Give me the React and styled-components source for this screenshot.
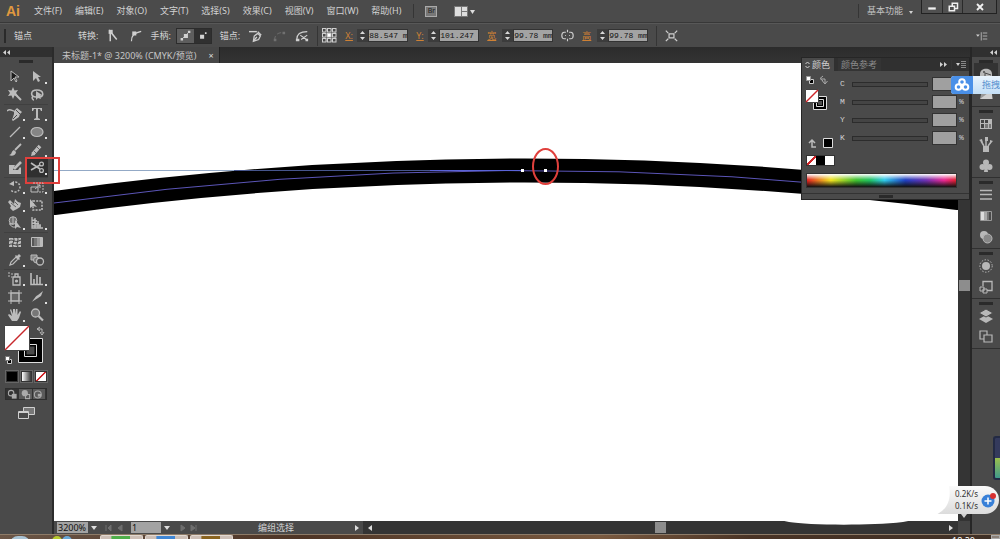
import React from "react";
import styled, { createGlobalStyle, css } from "styled-components";

const GlobalStyle = createGlobalStyle`
  * {
    box-sizing: border-box;
  }

  body {
    margin: 0;
    overflow: hidden;
    background: #4a4a4a;
    color: #d2d2d2;
    font-family: "Noto Sans", "Noto Sans CJK SC", sans-serif;
    font-size: 9px;
    line-height: 12px;
  }

  button,
  input,
  select {
    margin: 0;
    padding: 0;
    border: 0;
    border-radius: 0;
    background: none;
    color: inherit;
    font: inherit;
  }
`;

const solid = { fill: "currentColor", stroke: "none" };

const toolGroups = [
  [
    { name: "选择工具", art: <path d="M4 2v10l3-3 2 4 1-1-2-4h4z" fill="#1c1c1c" />, plain: true },
    { name: "直接选择工具", art: <path d="M4 2v10l3-3 2 4 2-1-2-4h3z" {...solid} /> },
    {
      name: "魔棒工具",
      art: (
        <>
          <path d="M7 6l7 7" strokeWidth="2" />
          <path d="M6 0l1.500 3.500L11 3 9 6l2 3-3.500-.5L6 12l-1.500-3.500L1 9l2-3-2-3 3.500.5z" {...solid} />
        </>
      ),
      plain: true,
    },
    {
      name: "套索工具",
      art: (
        <>
          <path d="M7 10C1 10 1 3 8 3s7 6 3 7M4 9c-2 2 0 4 1 4" strokeWidth="1.6" />
          <path d="M7 4v9l2-2 3 1-1-3 2-1z" {...solid} />
        </>
      ),
      plain: true,
    },
  ],
  [
    {
      name: "钢笔工具",
      art: (
        <>
          <path d="M0 5c3-3 5 0 7 0" strokeWidth="1.6" />
          <path d="M7 5l3-3 5 4-2 2-1 3-6 4-1-1 2-6z" {...solid} />
          <path d="M6 13l4-4M9 4l4 4" stroke="#4a4a4a" />
        </>
      ),
    },
    { name: "文字工具", art: <path d="M3 2h10v3h-1l-1-2H9v9l2 1v1H5v-1l2-1V3H5L4 5H3z" {...solid} /> },
    { name: "直线段工具", art: <path d="M3 13L13 3" strokeWidth="1.2" /> },
    { name: "椭圆工具", art: <ellipse cx="8" cy="8" rx="6" ry="4.5" fill="#858585" strokeWidth="1.2" /> },
    {
      name: "画笔工具",
      art: (
        <>
          <path d="M8 8l6-6" strokeWidth="1.8" />
          <path d="M2 13c3 0 2-4 5-5l2 2c0 3-4 5-7 3z" {...solid} />
        </>
      ),
      plain: true,
    },
    {
      name: "铅笔工具",
      art: (
        <>
          <path d="M4 12l7-8" strokeWidth="3.6" />
          <path d="M2 14l1-4 3 3z" {...solid} />
          <path d="M5 9l3 3M8 5l3 3" stroke="#4a4a4a" strokeWidth="0.8" />
        </>
      ),
    },
    {
      name: "斑点画笔工具",
      art: (
        <>
          <path d="M2 5h6l-2 5h5l2-3 1 1v6H2z" {...solid} />
          <path d="M7 9l7-7" strokeWidth="2.6" />
        </>
      ),
      plain: true,
    },
    {
      name: "剪刀工具",
      art: (
        <>
          <path d="M2 3l9 6M2 10l9-5" strokeWidth="1.6" />
          <circle cx="12.5" cy="4" r="1.9" strokeWidth="1.3" />
          <circle cx="12.5" cy="10.5" r="1.9" strokeWidth="1.3" />
        </>
      ),
      marked: true,
    },
  ],
  [
    {
      name: "旋转工具",
      art: (
        <>
          <path d="M5 4a5 5 0 1 1-1 7" strokeDasharray="2 1.4" strokeWidth="1.4" />
          <path d="M7 2v5L2 5z" {...solid} />
        </>
      ),
    },
    {
      name: "比例缩放工具",
      art: (
        <>
          <path d="M2 8h7v5H2z" />
          <path d="M4 4h10v9h-4" strokeDasharray="2 1" />
          <path d="M6 10l5-4M8 6h3v3" />
        </>
      ),
    },
    {
      name: "宽度工具",
      art: (
        <>
          <path d="M1 5l2-2 4 4 1-5 3 3 3 1-1 4-3 2-4 2-3-3 1-2z" {...solid} />
          <path d="M4 6l5 4M8 5l3 3" stroke="#4a4a4a" strokeWidth="0.8" />
        </>
      ),
    },
    {
      name: "自由变换工具",
      art: (
        <>
          <path d="M4 4h9v9H4z" strokeDasharray="2 1.2" strokeWidth="1.6" />
          <path d="M1 2v9l3-2 4 1z" {...solid} />
        </>
      ),
      plain: true,
    },
    {
      name: "形状生成器工具",
      art: (
        <>
          <circle cx="6" cy="5.5" r="3.8" fill="#707070" />
          <path d="M3 8a4 4 0 0 0 5 4M6 2v7H2" />
          <path d="M8 5v9l2-2 4 1z" {...solid} />
        </>
      ),
    },
    {
      name: "透视网格工具",
      art: <path d="M3 2v11h11M3 5l5 1M3 8l7 1M3 11h9M6 3v10M9 6v7M11 9v4" strokeWidth="1.3" />,
    },
  ],
  [
    {
      name: "网格工具",
      art: (
        <>
          <path d="M2 4h12v9H2z" {...solid} />
          <path d="M2 7c4-3 5 3 12-1M2 11c4-3 6 2 12-1M6 3c3 4-2 6 0 10M10 3c3 4-2 6 1 10" stroke="#3b3b3b" />
        </>
      ),
      plain: true,
    },
    {
      name: "渐变工具",
      art: (
        <>
          <path d="M3 4h2v8H3z" fill="#555" stroke="none" />
          <path d="M5 4h3v8H5z" fill="#777" stroke="none" />
          <path d="M8 4h3v8H8z" fill="#999" stroke="none" />
          <path d="M11 4h2v8h-2z" fill="#bbb" stroke="none" />
          <path d="M2.500 3.500h11v9h-11z" />
        </>
      ),
      plain: true,
    },
    {
      name: "吸管工具",
      art: (
        <>
          <path d="M3 13l1-3 5-5 2 2-5 5z" strokeWidth="1.2" />
          <path d="M8 4l1-1 1 1 2-2 2 2-2 2 1 1-1 1z" {...solid} />
        </>
      ),
    },
    {
      name: "混合工具",
      art: (
        <>
          <path d="M2 3h6v5H2z" fill="#858585" />
          <circle cx="7.500" cy="8" r="3" fill="#777" />
          <circle cx="11" cy="9.500" r="3.500" fill="#4a4a4a" strokeWidth="1.300" />
        </>
      ),
      plain: true,
    },
  ],
  [
    {
      name: "符号喷枪工具",
      art: (
        <>
          <path d="M6 6h7v8H6zM8 6V3h3v3" strokeWidth="1.300" />
          <circle cx="9.500" cy="10" r="1.600" {...solid} />
          <path d="M1 2h2M4 3h2M1 5h2M4 6h1" />
        </>
      ),
    },
    { name: "柱形图工具", art: <path d="M2 2v11.500h12M5 13V8M8 13V4M11 13V6" strokeWidth="1.600" /> },
    {
      name: "画板工具",
      art: (
        <>
          <path d="M4 4h8v8H4z" fill="#666" />
          <path d="M4 1v14M12 1v14M1 4h14M1 12h14" />
        </>
      ),
      plain: true,
    },
    {
      name: "切片工具",
      art: <path d="M1 14c4-2 4-6 8-8l5-4-2 5-3 2zM8 8l2 2" {...solid} />,
    },
    {
      name: "抓手工具",
      art: <path d="M5 14l-4-6 1-1 3 2-2-6 1-1 2 5V2h2v5l1-5h1.500v6L13 4l1 1-2 6-2 3z" {...solid} />,
    },
    {
      name: "缩放工具",
      art: (
        <>
          <circle cx="6.500" cy="6" r="4" fill="#777" strokeWidth="1.300" />
          <path d="M9.500 9l4.500 4.500" strokeWidth="2.200" />
        </>
      ),
      plain: true,
    },
  ],
];

const dockGroups = [
  [
    {
      name: "颜色",
      art: (
        <>
          <path d="M2 8c0-7 12-7 12 0v5H2z" {...solid} />
          <circle cx="6" cy="6" r="1" fill="#4a4a4a" stroke="none" />
          <path d="M7 12V7l6 2" stroke="#4a4a4a" />
        </>
      ),
      open: true,
    },
    {
      name: "颜色参考",
      art: (
        <>
          <path d="M4 3h9l2 9H2z" fill="#999" stroke="none" />
          <path d="M2 12L14 3v9z" fill="#d0d0d0" stroke="none" />
        </>
      ),
    },
  ],
  [
    {
      name: "色板",
      art: (
        <>
          <path d="M2 3h12v10H2z" {...solid} />
          <path d="M3 4h3v3H3zM7 4h3v3H7zM3 8h3v4H3z" fill="#444" stroke="none" />
          <path d="M7 8h3v4H7zM11 8h2v4h-2z" fill="#777" stroke="none" />
        </>
      ),
    },
    {
      name: "画笔",
      art: (
        <>
          <path d="M5 9h6v6H5z" {...solid} />
          <path d="M8 9V1M6 9L3 4M10 9l3-4" strokeWidth="1.500" />
          <path d="M1 3l3-1 1 4zM7 0h3v4H7zM12 3l3 1-3 3z" {...solid} />
        </>
      ),
    },
    {
      name: "符号",
      art: (
        <g {...solid}>
          <circle cx="8" cy="4.500" r="3" />
          <circle cx="4.500" cy="9" r="3" />
          <circle cx="11.500" cy="9" r="3" />
          <path d="M7 6h2l1 8H6z" />
        </g>
      ),
    },
  ],
  [
    { name: "描边", art: <path d="M2 3.500h12M2 7.500h12M2 12h12" strokeWidth="1.500" /> },
    {
      name: "渐变",
      art: (
        <>
          <path d="M3 4h3v8H3z" fill="#ddd" stroke="none" />
          <path d="M6 4h3v8H6z" fill="#aaa" stroke="none" />
          <path d="M9 4h2v8H9z" fill="#777" stroke="none" />
          <path d="M2.500 3.500h11v9h-11z" stroke="#999" />
        </>
      ),
    },
    {
      name: "透明度",
      art: (
        <>
          <circle cx="6" cy="6" r="4" {...solid} />
          <circle cx="9.500" cy="9.500" r="4.500" fill="#888" />
        </>
      ),
    },
  ],
  [
    {
      name: "外观",
      art: (
        <>
          <circle cx="8" cy="8" r="4" {...solid} />
          <circle cx="8" cy="8" r="6.200" strokeDasharray="1.500 1.500" />
        </>
      ),
    },
    {
      name: "图形样式",
      art: (
        <>
          <path d="M5 7V2.500h9v9H9" strokeWidth="1.300" />
          <path d="M2 8h4v4H2zM5 10h4v4H5z" />
        </>
      ),
    },
  ],
  [
    {
      name: "图层",
      art: (
        <>
          <path d="M8 7l7 4-7 4-7-4z" {...solid} />
          <path d="M8 1l7 4-7 4-7-4z" {...solid} stroke="#4a4a4a" />
        </>
      ),
    },
    {
      name: "画板",
      art: (
        <>
          <path d="M2 2h7v8H2z" strokeWidth="1.200" />
          <path d="M6 6h8v7H6z" fill="#4a4a4a" strokeWidth="1.200" />
        </>
      ),
    },
  ],
];

const menus = ["文件(F)", "编辑(E)", "对象(O)", "文字(T)", "选择(S)", "效果(C)", "视图(V)", "窗口(W)", "帮助(H)"];

function Icon({ size = 16, children, ...rest }) {
  return (
    <Glyph width={size} height={size} viewBox="0 0 16 16" aria-hidden="true" {...rest}>
      {children}
    </Glyph>
  );
}

function DoubleArrow({ flip }) {
  return (
    <Glyph width="7" height="5" viewBox="0 0 7 5" aria-hidden="true">
      <path d={flip ? "M0 0l3 2.500-3 2.500zM4 0l3 2.500-3 2.500z" : "M3 0v5L0 2.500zM7 0v5L4 2.500z"} {...solid} />
    </Glyph>
  );
}

function Triangle({ dir = "down" }) {
  const shapes = {
    down: "M0 1h6L3 5z",
    left: "M5 0v6L1 3z",
    right: "M1 0v6l4-3z",
  };
  return (
    <Glyph width="6" height="6" viewBox="0 0 6 6" aria-hidden="true">
      <path d={shapes[dir]} {...solid} />
    </Glyph>
  );
}

function Measure({ label, value, wide }) {
  return (
    <MeasureBox>
      <MeasureName $wide={wide}>{label}</MeasureName>
      <Spinner aria-hidden="true" viewBox="0 0 11 13">
        <path d="M3 5l2.500-3L8 5zM3 8l2.500 3L8 8z" />
      </Spinner>
      <MeasureInput defaultValue={value} />
    </MeasureBox>
  );
}

function MenuBar() {
  return (
    <MenuRow>
      <Logo>Ai</Logo>
      <MenuList>
        {menus.map((m) => (
          <MenuButton key={m}>{m}</MenuButton>
        ))}
      </MenuList>
      <Divider $h={14} />
      <BridgeButton>Br</BridgeButton>
      <IconButton aria-label="排列文档">
        <Glyph width="22" height="11" viewBox="0 0 22 11">
          <path d="M0 0h14v11H0z" fill="#777" stroke="none" />
          <path d="M1 1h6v9H1zM8 1h5v4H8zM8 6h5v4H8zM16 4h5l-2.500 4z" fill="#dedede" stroke="none" />
        </Glyph>
      </IconButton>
      <Push />
      <Divider $h={14} />
      <Workspace aria-label="工作区" defaultValue="基本功能">
        <option>基本功能</option>
      </Workspace>
      <WorkspaceArrow>
        <Glyph width="4" height="3" viewBox="0 0 4 3">
          <path d="M0 0h4L2 3z" {...solid} />
        </Glyph>
      </WorkspaceArrow>
      <WindowButtons>
        <WindowButton aria-label="最小化" $w={21}>
          <Icon size={12}>
            <path d="M3 10h10" strokeWidth="3" />
          </Icon>
        </WindowButton>
        <WindowButton aria-label="还原" $w={20}>
          <Icon size={12}>
            <path d="M7 6V3h7v7h-3M3 7h7v6H3z" strokeWidth="2" />
          </Icon>
        </WindowButton>
        <WindowButton aria-label="关闭" $w={33}>
          <Icon size={12}>
            <path d="M4 4l8 8M12 4l-8 8" strokeWidth="2.500" />
          </Icon>
        </WindowButton>
      </WindowButtons>
    </MenuRow>
  );
}

function ControlBar() {
  return (
    <ControlRow>
      <Grip $vertical />
      <ContextName>锚点</ContextName>
      <ControlGroup>
        <span>转换:</span>
        <IconButton aria-label="转换为尖角">
          <Icon size={13}>
            <path d="M4 15V3l8 10" strokeWidth="1.800" />
            <path d="M2 1h5v5H2z" {...solid} />
          </Icon>
        </IconButton>
        <IconButton aria-label="转换为平滑">
          <Icon size={13}>
            <path d="M3 15c0-7 3-10 12-12" strokeWidth="1.500" />
            <path d="M4 3h5v5H4z" {...solid} />
          </Icon>
        </IconButton>
      </ControlGroup>
      <ControlGroup>
        <span>手柄:</span>
        <HandleButtons>
          <HandleButton aria-label="显示手柄" $lit>
            <Icon size={13}>
              <path d="M3 13L13 3" />
              <path d="M6 6h5v5H6zM11 2h3v3h-3zM2 11h3v3H2z" {...solid} />
            </Icon>
          </HandleButton>
          <HandleButton aria-label="隐藏手柄">
            <Icon size={13}>
              <path d="M5 7h5v5H5zM11 4h2v2h-2z" {...solid} />
            </Icon>
          </HandleButton>
        </HandleButtons>
      </ControlGroup>
      <ControlGroup>
        <span>锚点:</span>
        <IconButton aria-label="删除锚点">
          <Icon size={14}>
            <path d="M0 3h9" strokeWidth="1.600" />
            <path d="M5 14l1-6 4-3 3 3-2 4z" strokeWidth="1.500" />
            <path d="M10 3l4 4M5 14l4-5" strokeWidth="1.600" />
          </Icon>
        </IconButton>
        <IconButton aria-label="连接终点" disabled>
          <Icon size={14}>
            <path d="M3 13c0-6 3-9 10-9" strokeDasharray="5 3" />
            <path d="M2 11h3v3H2zM12 3h3v3h-3z" {...solid} />
          </Icon>
        </IconButton>
        <IconButton aria-label="剪切路径">
          <Icon size={14}>
            <path d="M2 12c0-6 4-9 12-9M6 7l7 5M7 12l7-5" strokeWidth="1.400" />
            <path d="M1 11h4v3H1zM12 11h3v3h-3z" {...solid} />
          </Icon>
        </IconButton>
      </ControlGroup>
      <ControlGroup $tight>
        <Divider $h={20} />
        <IconButton aria-label="参考点">
          <Glyph width="15" height="15" viewBox="0 0 15 15">
            <path d="M2 2h11v11H2z" stroke="#aaa" />
            {[2.5, 7.5, 12.5].map((x) =>
              [2.5, 7.5, 12.5].map((y) => (
                <rect
                  key={`${x}-${y}`}
                  x={x - 2}
                  y={y - 2}
                  width="3.500"
                  height="3.500"
                  fill={x === 7.5 && y === 7.5 ? "#fff" : "#4a4a4a"}
                />
              ))
            )}
          </Glyph>
        </IconButton>
      </ControlGroup>
      <Measure label="X:" value="88.547 mm" />
      <Measure label="Y:" value="101.247 mm" />
      <Measure label="宽" value="99.78 mm" wide />
      <IconButton aria-label="约束宽度和高度比例">
        <Icon size={13}>
          <path d="M6 4H4C0 4 0 12 4 12h2M10 4h2c4 0 4 8 0 8h-2M8 1v3M8 12v3M5 8h1M10 8h1" strokeWidth="1.400" />
        </Icon>
      </IconButton>
      <Measure label="高" value="99.78 mm" wide />
      <Divider $h={20} />
      <IconButton aria-label="隔离选中的对象">
        <Icon size={13}>
          <path d="M5 6h6v5H5zM1 2l3 3M15 2l-3 3M1 15l3-3M15 15l-3-3" strokeWidth="1.500" />
        </Icon>
      </IconButton>
      <Push />
      <IconButton aria-label="面板菜单">
        <Icon size={12}>
          <path d="M0 6h5L2.500 9z" {...solid} />
          <path d="M7 3v11M9 4h6M9 8h6M9 12h6" />
        </Icon>
      </IconButton>
    </ControlRow>
  );
}

function ToolPanel() {
  return (
    <ToolColumn>
      <ColumnTop>
        <DoubleArrow />
      </ColumnTop>
      <ToolBody>
        <Grip />
        {toolGroups.map((group, i) => (
          <ToolGroup key={i}>
            {group.map((tool) => (
              <ToolButton key={tool.name} aria-label={tool.name} $marked={tool.marked}>
                <Icon>{tool.art}</Icon>
                {!tool.plain && <Corner />}
                {tool.marked && <RedBox />}
              </ToolButton>
            ))}
          </ToolGroup>
        ))}
        <Swatches width="46" height="44" viewBox="0 0 46 44" aria-hidden="true">
          <path d="M14.500 14.500h24v24h-24z" fill="#000" stroke="#ddd" />
          <path d="M20.500 20.500h12v12h-12z" stroke="#ddd" />
          <path d="M22.500 22.500h8v8h-8z" fill="#4a4a4a" stroke="none" />
          <path d="M.500 1.500h25v25H.500z" fill="#fff" stroke="#444" />
          <path d="M1 26L25 2" stroke="#c8282c" strokeWidth="1.500" />
          <path d="M34 5h4v4M36 3l-3 2 3 2M36 8l2 3 2-3" stroke="#bbb" />
          <path d="M3.500 35.500h4v4h-4z" fill="#000" stroke="#ccc" />
          <path d="M1.500 32.500h4v4h-4z" fill="#fff" stroke="#777" />
        </Swatches>
        <PaintRow>
          <PaintButton aria-label="颜色" $paint="#000" />
          <PaintButton aria-label="渐变" $paint="linear-gradient(90deg, #fff, #333)" />
          <PaintButton aria-label="无" $paint="linear-gradient(135deg, #fff 42%, #d02528 43%, #d02528 57%, #fff 58%)" />
        </PaintRow>
        <ModeRow>
          <ModeButton aria-label="正常绘图" $lit>
            <Icon size={11}>
              <circle cx="6" cy="6" r="4" strokeWidth="1.500" />
              <path d="M7 7h7v7H7z" {...solid} />
            </Icon>
          </ModeButton>
          <ModeButton aria-label="背面绘图">
            <Icon size={11}>
              <path d="M8 8h6v6H8z" strokeWidth="1.500" />
              <circle cx="7" cy="6" r="4.500" {...solid} />
            </Icon>
          </ModeButton>
          <ModeButton aria-label="内部绘图">
            <Icon size={11}>
              <circle cx="7" cy="8" r="5" strokeWidth="1.500" />
              <path d="M7 7h5v4H7z" {...solid} />
            </Icon>
          </ModeButton>
        </ModeRow>
        <ScreenButton aria-label="更改屏幕模式">
          <Glyph width="17" height="13" viewBox="0 0 17 13">
            <path d="M5.500.500h11v7h-11z" fill="#777" />
            <path d="M.500 4.500h10v7H.500z" fill="#4a4a4a" />
            <path d="M1 5h9" strokeWidth="2" />
          </Glyph>
        </ScreenButton>
      </ToolBody>
    </ToolColumn>
  );
}

function ColorPanel() {
  return (
    <Panel>
      <PanelTabs>
        <PanelTab $active>
          <Glyph width="5" height="8" viewBox="0 0 5 8">
            <path d="M.500 3l2-2 2 2M.500 5l2 2 2-2" />
          </Glyph>
          颜色
        </PanelTab>
        <PanelTab>颜色参考</PanelTab>
        <Push />
        <DoubleArrow flip />
        <Divider $h={9} />
        <Glyph width="10" height="7" viewBox="0 0 10 7">
          <path d="M0 2h4L2 5z" {...solid} />
          <path d="M5 .500h5M5 2.500h5M5 4.500h5M5 6.500h5" stroke="#888" />
        </Glyph>
      </PanelTabs>
      <PanelBody>
        <PanelPaint width="30" height="84" viewBox="0 0 30 84" aria-hidden="true">
          <path d="M4.500 8.500h4v4h-4z" fill="#000" stroke="#ccc" />
          <path d="M1.500 5.500h4v4h-4z" fill="#fff" stroke="#999" />
          <path d="M16 8h4v4M18 5l-3 2.500 3 2.500M17.500 10l2.500 3 2.500-3" stroke="#aaa" />
          <path d="M8.500 25.500h13v13h-13z" fill="#000" stroke="#ddd" />
          <path d="M11.500 28.500h7v7h-7z" stroke="#ddd" />
          <path d="M13 30h4v4h-4z" fill="#4a4a4a" stroke="none" />
          <path d="M.500 18.500h13v13h-13z" fill="#fff" stroke="#444" />
          <path d="M1 31L13 19" stroke="#d02528" strokeWidth="1.500" />
          <path d="M11 76H7v-6M4 72l3-3 3 3" stroke="#bbb" strokeWidth="1.500" />
          <path d="M18.500 67.500h9v9h-9z" fill="#000" stroke="#ddd" />
        </PanelPaint>
        <Channels>
          {["C", "M", "Y", "K"].map((c) => (
            <Channel key={c}>
              <ChannelName htmlFor={`ink-${c}`}>{c}</ChannelName>
              <ChannelRange id={`ink-${c}`} type="range" min="0" max="100" defaultValue="0" />
              <ChannelInput aria-label={`${c} %`} />
              <span>%</span>
            </Channel>
          ))}
        </Channels>
      </PanelBody>
      <ChipRow>
        <Chip aria-label="无" $paint="linear-gradient(135deg, #fff 42%, #d02528 43%, #d02528 57%, #fff 58%)" />
        <Chip aria-label="黑" $paint="#000" />
        <Chip aria-label="白" $paint="#fff" />
      </ChipRow>
      <Spectrum />
      <PanelFoot>
        <Grip />
      </PanelFoot>
    </Panel>
  );
}

function Dock() {
  return (
    <DockColumn>
      <ColumnTop $end>
        <DoubleArrow />
      </ColumnTop>
      {dockGroups.map((group, i) => (
        <DockGroup key={i}>
          <Grip />
          {group.map((p) => (
            <DockButton key={p.name} aria-label={p.name} $open={p.open}>
              <Icon>{p.art}</Icon>
            </DockButton>
          ))}
        </DockGroup>
      ))}
      <Meter />
    </DockColumn>
  );
}

function StatusBar() {
  return (
    <StatusRow>
      <StatusInput aria-label="缩放" defaultValue="3200%" $w={31} />
      <StatusButton aria-label="缩放级别">
        <Triangle />
      </StatusButton>
      <PagerMark>
        <path d="M1 1v6M6 1v6L3 4zM17 1v6l-4-3z" />
      </PagerMark>
      <StatusInput aria-label="画板" defaultValue="1" $w={30} />
      <StatusButton aria-label="画板列表">
        <Triangle />
      </StatusButton>
      <PagerMark>
        <path d="M3 1v6l4-3zM13 1v6l4-3zM18 1v6" />
      </PagerMark>
      <StatusText>编组选择</StatusText>
      <StatusButton aria-label="状态菜单">
        <Triangle dir="right" />
      </StatusButton>
      <HScroll>
        <Triangle dir="left" />
        <ScrollThumb />
        <Triangle dir="right" />
      </HScroll>
      <ScrollCorner />
    </StatusRow>
  );
}

function NetMeter() {
  return (
    <NetBox>
      <NetBlob viewBox="0 0 190 40" aria-hidden="true">
        <path d="M0 0H182C185 17 178 27 162 31L136 36C100 40 40 39 22 36L8 33 0 31z" fill="#fff" />
      </NetBlob>
      <NetPill>
        <NetSpeeds>
          <span>0.2K/s</span>
          <span>0.1K/s</span>
        </NetSpeeds>
        <Glyph width="16" height="16" viewBox="0 0 16 16">
          <circle cx="7" cy="9" r="6.500" fill="#3880d8" stroke="none" />
          <path d="M7 5.500v7M3.500 9h7" stroke="#fff" strokeWidth="1.500" />
          <circle cx="12" cy="4" r="3" fill="#d8302f" stroke="none" />
        </Glyph>
      </NetPill>
    </NetBox>
  );
}

function App() {
  return (
    <Window>
      <GlobalStyle />
      <MenuBar />
      <ControlBar />
      <Workarea>
        <ToolPanel />
        <Center>
          <TabStrip>
            <DocTab>
              未标题-1* @ 3200% (CMYK/预览)
              <CloseTab aria-label="关闭文档">×</CloseTab>
            </DocTab>
          </TabStrip>
          <CanvasRow>
            <Canvas>
              <Artwork aria-hidden="true">
                <path d="M-10 141.400L0 140Q452 77.600 904 135L914 136.300" stroke="#000" strokeWidth="24" />
                <path d="M0 140Q452 77.600 904 135" stroke="#5b55b8" />
                <path d="M0 107.500h250" stroke="#93a9c6" />
                <path d="M180 107.500h196" stroke="#46558c" />
                <path d="M376 107.500h92" stroke="#5a63d8" />
                <path d="M467 106h3v3h-3zM490 106h3v3h-3z" fill="#fff" />
                <ellipse cx="491.500" cy="103.500" rx="12.500" ry="17.500" stroke="#e0403c" strokeWidth="2" />
              </Artwork>
            </Canvas>
            <VScroll>
              <ScrollThumb $vertical />
              <Triangle />
            </VScroll>
            <ColorPanel />
          </CanvasRow>
          <StatusBar />
        </Center>
        <Dock />
        <DragTag>
          <TagIcon>
            <Glyph width="16" height="14" viewBox="0 0 16 14" aria-hidden="true">
              <g stroke="#fff" strokeWidth="2">
                <circle cx="8" cy="4" r="2.800" />
                <circle cx="4.500" cy="9" r="2.800" />
                <circle cx="11.500" cy="9" r="2.800" />
              </g>
            </Glyph>
          </TagIcon>
          <TagText>拖拽</TagText>
        </DragTag>
        <NetMeter />
      </Workarea>
      <Taskbar>
        <StartOrb />
        <QuickDots width="24" height="5" viewBox="0 0 24 5" aria-hidden="true">
          <circle cx="7" cy="6" r="5" fill="#b6c92e" />
          <circle cx="17" cy="6" r="5" fill="#6aa9d8" />
        </QuickDots>
        <TaskButton aria-label="浏览器" $tint="#4fae4a" />
        <TaskButton aria-label="文件夹" $tint="#3f86d4" />
        <TaskButton aria-label="Illustrator" $tint="#8a6420" />
        <Push />
        <Clock>18:20</Clock>
        <ShowDesktop aria-label="显示桌面" />
      </Taskbar>
    </Window>
  );
}

export default App;

const Window = styled.div`
  display: flex;
  flex-direction: column;
  height: 100vh;
`;

const Glyph = styled.svg`
  display: block;
  flex: none;
  fill: none;
  stroke: currentColor;
`;

const Push = styled.div`
  flex: 1;
`;

const Divider = styled.div`
  flex: none;
  width: 1px;
  height: ${(p) => p.$h}px;
  background: #353535;
`;

const Grip = styled.div`
  flex: none;
  width: 14px;
  height: 3px;
  background: #2a2a2a;
  ${(p) =>
    p.$vertical &&
    css`
      width: 2px;
      height: 14px;
    `}
`;

const IconButton = styled.button`
  display: flex;
  flex: none;
  color: #cfcfcf;

  &:disabled {
    color: #707070;
  }
`;

const MenuRow = styled.header`
  display: flex;
  flex: none;
  align-items: center;
  height: 23px;
  background: #4b4b4b;
  border-bottom: 1px solid #383838;
`;

const Logo = styled.div`
  width: 34px;
  padding-left: 6px;
  color: #e0993f;
  font-family: "Liberation Sans", sans-serif;
  font-size: 14px;
  font-weight: bold;
  line-height: 22px;
`;

const MenuList = styled.nav`
  display: flex;
  gap: 13px;
  margin-right: 12px;
`;

const MenuButton = styled.button`
  white-space: nowrap;
`;

const BridgeButton = styled.button`
  width: 12px;
  height: 11px;
  margin: 0 17px 0 11px;
  border: 1px solid #aaa;
  background: #777;
  color: #222;
  font-size: 7px;
  line-height: 8px;
`;

const Workspace = styled.select`
  appearance: none;
  width: 38px;
  margin-left: 8px;
  color: #c2c2c2;
`;

const WorkspaceArrow = styled.span`
  margin: 2px 8px 0 4px;
`;

const WindowButtons = styled.div`
  display: flex;
  align-self: flex-start;
  margin-right: 3px;
  border: 1px solid #222;
  border-top: 0;
`;

const WindowButton = styled.button`
  display: flex;
  align-items: center;
  justify-content: center;
  width: ${(p) => p.$w}px;
  height: 13px;
  border-right: 1px solid #2a2a2a;
  background: #505050;
  color: #f0f0f0;

  &:last-child {
    border-right: 0;
  }
`;

const ControlRow = styled.div`
  display: flex;
  flex: none;
  align-items: center;
  gap: 8px;
  height: 24px;
  padding: 0 12px 0 4px;
  border-top: 1px solid #585858;
  background: #4a4a4a;
`;

const ContextName = styled.div`
  flex: none;
  width: 56px;
`;

const ControlGroup = styled.div`
  display: flex;
  flex: none;
  align-items: center;
  gap: ${(p) => (p.$tight ? 4 : 9)}px;
`;

const HandleButtons = styled.div`
  display: flex;
  margin-left: -4px;
  border: 1px solid #2c2c2c;
`;

const HandleButton = styled.button`
  display: flex;
  align-items: center;
  justify-content: center;
  width: 17px;
  height: 14px;
  background: ${(p) => (p.$lit ? "#5e5e5e" : "#303030")};
`;

const MeasureBox = styled.label`
  display: flex;
  flex: none;
  align-items: center;
`;

const MeasureName = styled.span`
  width: ${(p) => (p.$wide ? 15 : 12)}px;
  color: #cf8134;
  text-decoration: underline;
`;

const Spinner = styled.svg`
  width: 11px;
  height: 13px;
  background: #3c3c3c;
  fill: #d8d8d8;
`;

const MeasureInput = styled.input`
  width: 40px;
  height: 13px;
  border: 1px solid #333;
  background: #a3a3a3;
  color: #141414;
  font-family: "Liberation Mono", monospace;
  font-size: 8px;
`;

const Workarea = styled.div`
  position: relative;
  display: flex;
  flex: 1;
  min-height: 0;
  overflow: hidden;
`;

const ToolColumn = styled.aside`
  position: relative;
  z-index: 2;
  flex: none;
  width: 54px;
  border-right: 2px solid #2b2b2b;
  background: #4a4a4a;
`;

const ColumnTop = styled.div`
  display: flex;
  flex: none;
  align-items: center;
  justify-content: ${(p) => (p.$end ? "flex-end" : "flex-start")};
  height: 10px;
  padding: 0 3px;
  background: #303030;
`;

const ToolBody = styled.div`
  display: flex;
  flex-direction: column;
  padding: 3px 4px;

  > ${Grip} {
    align-self: center;
    margin-bottom: 5px;
  }
`;

const ToolGroup = styled.div`
  display: grid;
  grid-template-columns: 22px 22px;

  & + & {
    border-top: 1px solid #404040;
  }
`;

const ToolButton = styled.button`
  position: relative;
  display: flex;
  align-items: center;
  justify-content: center;
  height: 18px;
  background: ${(p) => (p.$marked ? "#303030" : "none")};
  color: #bcbcbc;
`;

const Corner = styled.span`
  position: absolute;
  right: 1px;
  bottom: 2px;
  width: 2px;
  height: 2px;
  background: #e0e0e0;
`;

const RedBox = styled.span`
  position: absolute;
  top: -2px;
  left: -1px;
  width: 35px;
  height: 27px;
  border: 2px solid #e0403c;
`;

const Swatches = styled(Glyph)`
  margin-bottom: 2px;
`;

const PaintRow = styled.div`
  display: flex;
  gap: 1px;
  padding-left: 1px;
`;

const PaintButton = styled.button`
  width: 14px;
  height: 13px;
  border: 2px solid #333;
  outline: 1px solid #666;
  outline-offset: -1px;
  background: ${(p) => p.$paint};
`;

const ModeRow = styled.div`
  display: flex;
  margin: 5px 1px 7px;
  border: 1px solid #2e2e2e;
`;

const ModeButton = styled.button`
  display: flex;
  flex: 1;
  align-items: center;
  justify-content: center;
  height: 10px;
  border-right: 1px solid #333;
  background: ${(p) => (p.$lit ? "#333" : "#5a5a5a")};
  color: #aaa;
`;

const ScreenButton = styled(IconButton)`
  align-self: center;
`;

const Center = styled.main`
  display: flex;
  flex: 1;
  flex-direction: column;
  min-width: 0;
`;

const TabStrip = styled.div`
  display: flex;
  flex: none;
  height: 16px;
  background: linear-gradient(#2c2c2c, #343434);
`;

const DocTab = styled.div`
  display: flex;
  align-items: center;
  gap: 12px;
  padding: 1px 5px 0 8px;
  border-right: 1px solid #222;
  background: #474747;
  color: #c6c6c6;
  white-space: nowrap;
`;

const CloseTab = styled.button`
  color: #ddd;
`;

const CanvasRow = styled.div`
  position: relative;
  display: flex;
  flex: 1;
  min-height: 0;
`;

const Canvas = styled.div`
  flex: 1;
  min-width: 0;
  background: #fff;
`;

const Artwork = styled(Glyph)`
  width: 100%;
  height: 100%;
  stroke: none;
`;

const VScroll = styled.div`
  display: flex;
  flex: none;
  flex-direction: column;
  align-items: center;
  justify-content: space-between;
  width: 12px;
  padding-bottom: 2px;
  background: #343434;
`;

const ScrollThumb = styled.div`
  width: 11px;
  height: 11px;
  background: #8d8d8d;
  ${(p) =>
    p.$vertical &&
    css`
      margin-top: 217px;
    `}
`;

const Panel = styled.section`
  position: absolute;
  top: -6px;
  right: 0;
  width: 169px;
  border: 1px solid #262626;
  background: #4a4a4a;
`;

const PanelTabs = styled.div`
  display: flex;
  align-items: center;
  gap: 4px;
  height: 13px;
  padding-right: 3px;
  background: #303030;
`;

const PanelTab = styled.div`
  display: flex;
  align-items: center;
  gap: 2px;
  height: 13px;
  padding: 0 4px 0 3px;
  background: ${(p) => (p.$active ? "#4a4a4a" : "#343434")};
  color: ${(p) => (p.$active ? "#d0d0d0" : "#8b8b8b")};
`;

const PanelBody = styled.div`
  display: flex;
  height: 84px;
  padding-left: 3px;
`;

const PanelPaint = styled(Glyph)`
  margin-right: 5px;
`;

const Channels = styled.div`
  flex: 1;
  min-width: 0;
  padding-top: 4px;
`;

const Channel = styled.div`
  display: flex;
  align-items: center;
  height: 18px;
  font-family: "Liberation Mono", monospace;
  font-size: 8px;
`;

const ChannelName = styled.label`
  width: 12px;
`;

const ChannelRange = styled.input`
  appearance: none;
  flex: 1;
  width: 0;
  min-width: 0;
  height: 5px;
  border: 1px solid #2c2c2c;
  background: #444;

  &::-webkit-slider-thumb {
    appearance: none;
    width: 0;
    height: 0;
  }
`;

const ChannelInput = styled.input`
  width: 25px;
  height: 14px;
  margin: 0 2px 0 4px;
  border: 1px solid #333;
  background: #a0a0a0;

  & + span {
    width: 10px;
  }
`;

const ChipRow = styled.div`
  display: flex;
  width: 29px;
  margin-left: 4px;
  border: 1px solid #333;
`;

const Chip = styled.button`
  width: 9px;
  height: 9px;
  background: ${(p) => p.$paint};
`;

const Spectrum = styled.div`
  height: 15px;
  margin: 7px 12px 5px 4px;
  border: 1px solid #333;
  background:
    linear-gradient(#fff, rgba(255, 255, 255, 0) 45%, rgba(0, 0, 0, 0) 50%, #111),
    linear-gradient(90deg, #e02020, #f0e020 16%, #3fc030 33%, #20c060 42%, #30c8e8 52%, #2040c0 66%, #7030b0 80%, #e82890 92%, #e02030);
`;

const PanelFoot = styled.div`
  display: flex;
  align-items: center;
  justify-content: center;
  height: 6px;
  border-top: 1px solid #333;
`;

const StatusRow = styled.footer`
  display: flex;
  flex: none;
  align-items: center;
  height: 13px;
  padding-left: 3px;
  background: #4a4a4a;
`;

const StatusInput = styled.input`
  width: ${(p) => p.$w}px;
  height: 11px;
  padding: 0 1px;
  background: #a3a3a3;
  color: #111;
`;

const StatusButton = styled.button`
  display: flex;
  flex: none;
  align-items: center;
  justify-content: center;
  width: 12px;
  height: 11px;
  color: #ddd;
`;

const PagerMark = styled.svg.attrs({ viewBox: "0 0 20 8", "aria-hidden": true })`
  width: 20px;
  height: 8px;
  margin: 0 6px 0 5px;
  fill: #6f6f6f;
  stroke: #6f6f6f;
`;

const StatusText = styled.div`
  flex: none;
  width: 147px;
  padding-left: 54px;
  white-space: nowrap;
`;

const HScroll = styled.div`
  display: flex;
  flex: 1;
  align-items: center;
  justify-content: space-between;
  height: 13px;
  padding: 0 4px;
  background: #343434;
  color: #ddd;
`;

const ScrollCorner = styled.div`
  width: 12px;
  height: 13px;
  background: #444;
`;

const DockColumn = styled.aside`
  position: relative;
  display: flex;
  flex: none;
  flex-direction: column;
  width: 30px;
  border-left: 2px solid #262626;
  background: #4a4a4a;
`;

const DockGroup = styled.div`
  display: flex;
  flex-direction: column;
  align-items: center;
  padding: 3px 0 1px;
  border-bottom: 1px solid #303030;
`;

const DockButton = styled.button`
  display: flex;
  align-items: center;
  justify-content: center;
  width: 24px;
  height: 21px;
  background: ${(p) => (p.$open ? "#333" : "none")};
  color: #b8b8b8;
`;

const Meter = styled.div`
  position: absolute;
  top: 389px;
  right: 0;
  width: 7px;
  height: 44px;
  border: 2px solid #232a44;
  border-right: 0;
  border-radius: 3px 0 0 3px;
  background: linear-gradient(#343a5c 50%, #9bc04c 50%, #3f9a8c);
`;

const DragTag = styled.div`
  position: absolute;
  z-index: 3;
  top: 29px;
  right: 0;
  display: flex;
  width: 49px;
  height: 18px;
  overflow: hidden;
  border-radius: 3px 0 0 3px;
  background: linear-gradient(#eaf4fd, #c4dff6);
`;

const TagIcon = styled.div`
  display: flex;
  flex: none;
  align-items: center;
  justify-content: center;
  width: 22px;
  background: #4a90e8;
`;

const TagText = styled.span`
  flex: none;
  padding-left: 9px;
  color: #5590cf;
  line-height: 18px;
`;

const NetBox = styled.div`
  position: absolute;
  z-index: 3;
  right: 1px;
  bottom: 8px;
  display: flex;
  align-items: flex-start;
  justify-content: flex-end;
  width: 232px;
  height: 40px;
`;

const NetBlob = styled.svg`
  position: absolute;
  z-index: 1;
  left: 0;
  bottom: 0;
  width: 190px;
  height: 40px;
`;

const NetPill = styled.div`
  display: flex;
  align-items: center;
  justify-content: flex-end;
  gap: 3px;
  width: 90px;
  height: 28px;
  padding-right: 2px;
  border-radius: 0 14px 14px 0;
  background: linear-gradient(#fafafa, #dcdcdc);
  color: #333;
`;

const NetSpeeds = styled.div`
  position: relative;
  z-index: 2;
  display: flex;
  flex-direction: column;
  font-size: 8px;
`;

const Taskbar = styled.div`
  display: flex;
  flex: none;
  height: 5px;
  overflow: hidden;
  border-top: 1px solid #8d7b68;
  background: linear-gradient(90deg, #6b5647, #4e3526 30%, #7a5a40 60%, #4a3426 75%, #3f3026);
`;

const StartOrb = styled.div`
  width: 20px;
  height: 16px;
  margin: 1px 20px 0 10px;
  border-radius: 10px;
  background: #a9c3d4;
`;

const QuickDots = styled.svg`
  margin-right: 26px;
`;

const TaskButton = styled.button`
  width: 43px;
  margin-right: 2px;
  border: 1px solid #e2d8d0;
  border-bottom: 0;
  border-radius: 2px 2px 0 0;
  background: linear-gradient(90deg, #cdbfb6 25%, ${(p) => p.$tint} 26%, ${(p) => p.$tint} 70%, #cdbfb6 71%);
`;

const Clock = styled.div`
  margin-right: 16px;
  color: #fff;
`;

const ShowDesktop = styled.button`
  width: 9px;
  border: 1px solid #aaa;
  background: #8a8078;
`;
